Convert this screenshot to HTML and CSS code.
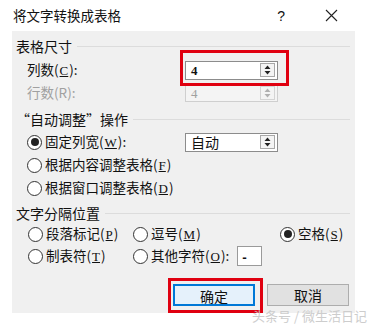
FILE: index.html
```
<!DOCTYPE html>
<html>
<head>
    <meta charset="utf-8">
    <link rel="stylesheet" href="styles.css">
</head>
<body>
    <div class="titlebar">
        <span class="title">将文字转换成表格</span>
        <span class="help">?</span>
        <svg class="close" width="13" height="13" viewBox="0 0 13 13"><path d="M1 1L12 12M12 1L1 12" stroke="#222" stroke-width="1.1" fill="none"/></svg>
    </div>

    <div class="panel">
        <div class="legend">表格尺寸</div>
        <div class="row">
            <span class="label">列数(<u>C</u>):</span>
            <div class="spin">
                <span class="val">4</span>
                <svg class="arrows" width="15" height="14" viewBox="0 0 15 14"><rect x="0.5" y="0.5" width="14" height="13" fill="#f4f4f4" stroke="#a8a8a8"/><path d="M4.5 6L7.5 2.5L10.5 6Z M4.5 8L7.5 11.5L10.5 8Z" fill="#222"/></svg>
            </div>
        </div>
        <div class="row disabled">
            <span class="label">行数(R):</span>
            <div class="spin">
                <span class="val">4</span>
                <svg class="arrows" width="15" height="14" viewBox="0 0 15 14"><rect x="0.5" y="0.5" width="14" height="13" fill="#f4f4f4" stroke="#d4d4d4"/><path d="M4.5 6L7.5 2.5L10.5 6Z M4.5 8L7.5 11.5L10.5 8Z" fill="#b0b0b0"/></svg>
            </div>
        </div>

        <div class="legend second">“自动调整”操作</div>
        <div class="row">
            <span class="opt"><i class="radio on"></i>固定列宽(<u>W</u>):</span>
            <div class="spin">
                <span class="val cjk">自动</span>
                <svg class="arrows" width="15" height="14" viewBox="0 0 15 14"><rect x="0.5" y="0.5" width="14" height="13" fill="#f4f4f4" stroke="#a8a8a8"/><path d="M4.5 6L7.5 2.5L10.5 6Z M4.5 8L7.5 11.5L10.5 8Z" fill="#222"/></svg>
            </div>
        </div>
        <div class="row">
            <span class="opt"><i class="radio"></i>根据内容调整表格(<u>F</u>)</span>
        </div>
        <div class="row">
            <span class="opt"><i class="radio"></i>根据窗口调整表格(<u>D</u>)</span>
        </div>

        <div class="legend third">文字分隔位置</div>
        <div class="seps">
            <span class="opt"><i class="radio"></i>段落标记(<u>P</u>)</span>
            <span class="opt"><i class="radio"></i>逗号(<u>M</u>)</span>
            <span class="opt"><i class="radio on"></i>空格(<u>S</u>)</span>
            <span class="opt"><i class="radio"></i>制表符(<u>T</u>)</span>
            <span class="opt"><i class="radio"></i>其他字符(<u>O</u>):<span class="other">-</span></span>
        </div>

        <div class="buttons">
            <button class="btn primary">确定</button>
            <button class="btn">取消</button>
        </div>
    </div>

    <div class="mark mark-cols"></div>
    <div class="mark mark-ok"></div>
    <div class="watermark">头条号 / 微生活日记</div>
</body>
</html>
```

FILE: styles.css
```
body {
    margin: 0;
    width: 370px;
    height: 327px;
    background: #fff;
    font-family: "Noto Sans CJK SC", "Noto Sans", sans-serif;
    font-size: 13.5px;
    line-height: 1;
    color: #111;
    position: relative;
    overflow: hidden;
}
.titlebar {
    display: flex;
    align-items: center;
    height: 31px;
    padding-left: 13px;
    font-size: 13.5px;
}
.title {
    flex: 1;
}
.help {
    font-family: "Liberation Sans", sans-serif;
    font-size: 14px;
    margin-right: 40px;
}
.close {
    margin-right: 32px;
}
.panel {
    margin-left: 12px;
    width: 343px;
    height: 282px;
    box-sizing: border-box;
    background: #f0f0f0;
    padding: 6px 5px 0 4px;
}
.legend {
    display: flex;
    align-items: center;
    height: 18px;
    font-size: 14px;
    margin-bottom: 4px;
}
.legend::after {
    content: "";
    flex: 1;
    border-top: 1px solid #dcdcdc;
    margin-left: 5px;
}
.legend.second {
    margin-top: 6px;
    margin-bottom: 3px;
}
.legend.third {
    margin-top: 5px;
    margin-bottom: 1px;
}
.row {
    display: grid;
    grid-template-columns: 158px 93px;
    align-items: center;
    height: 22px;
    padding-left: 11px;
}
.row + .row {
    margin-top: 1px;
}
.label, .opt {
    display: flex;
    align-items: center;
    white-space: nowrap;
}
u {
    font-family: "Liberation Serif", serif;
    text-decoration: underline;
    font-size: 13px;
    padding: 0 1px;
}
.disabled {
    color: #a0a0a0;
}
.spin {
    display: flex;
    align-items: center;
    height: 19px;
    box-sizing: border-box;
    border: 1px solid #8c8c8c;
    background: #fff;
}
.disabled .spin {
    border-color: #cfcfcf;
    background: #f4f4f4;
    height: 18px;
}
.val {
    flex: 1;
    padding-left: 5px;
    font-family: "Liberation Serif", serif;
    font-weight: bold;
    font-size: 13px;
}
.disabled .val {
    font-weight: normal;
}
.val.cjk {
    font-family: "Noto Sans CJK SC", sans-serif;
    font-weight: normal;
    font-size: 14px;
}
.arrows {
    margin-right: 2px;
}
.radio {
    width: 15px;
    height: 15px;
    box-sizing: border-box;
    border: 1px solid #333;
    border-radius: 50%;
    background: #fff;
    display: flex;
    align-items: center;
    justify-content: center;
    margin-right: 3px;
}
.radio.on::after {
    content: "";
    width: 8px;
    height: 8px;
    border-radius: 50%;
    background: #222;
}
.seps {
    display: grid;
    grid-template-columns: 105px 147px auto;
    grid-auto-rows: 22px;
    align-items: center;
    padding-left: 12px;
}
.other {
    display: inline-block;
    width: 25px;
    height: 20px;
    box-sizing: border-box;
    border: 1px solid #9a9a9a;
    background: #fff;
    margin-left: 8px;
    padding: 4px 0 0 4px;
    font-family: "Liberation Sans", sans-serif;
    font-weight: bold;
}
.buttons {
    display: flex;
    gap: 12px;
    margin-top: 17px;
    padding-left: 157px;
}
.btn {
    width: 82px;
    height: 22px;
    box-sizing: border-box;
    border: 1px solid #adadad;
    background: #e1e1e1;
    font-family: "Noto Sans CJK SC", sans-serif;
    font-size: 14px;
    color: #111;
    padding: 0;
}
.btn.primary {
    border: 2px solid #0078d7;
    background: #e5f1fb;
}
.mark {
    position: absolute;
    border: 3px solid #e00010;
    box-sizing: border-box;
}
.mark-cols {
    left: 180px;
    top: 50px;
    width: 109px;
    height: 36px;
}
.mark-ok {
    left: 168px;
    top: 278px;
    width: 95px;
    height: 35px;
}
.watermark {
    position: absolute;
    left: 252px;
    top: 309px;
    font-size: 13px;
    color: #cdcdcd;
}
```
